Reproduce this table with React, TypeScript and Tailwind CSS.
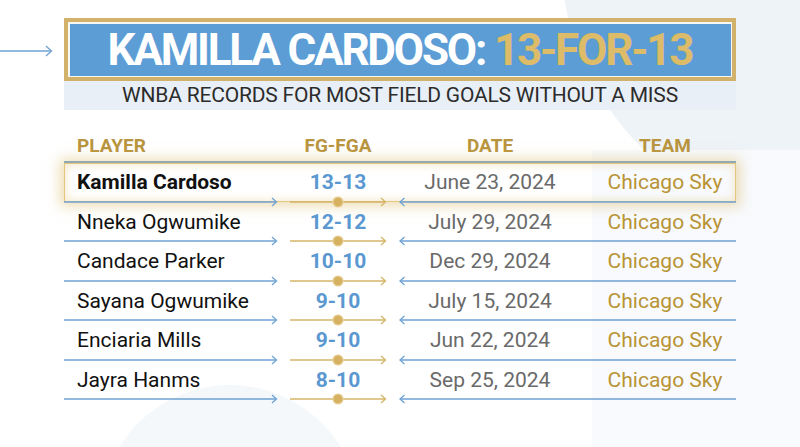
const rows = [
  { player: 'Kamilla Cardoso', fg: '13-13', date: 'June 23, 2024', team: 'Chicago Sky', top: true },
  { player: 'Nneka Ogwumike', fg: '12-12', date: 'July 29, 2024', team: 'Chicago Sky' },
  { player: 'Candace Parker', fg: '10-10', date: 'Dec 29, 2024', team: 'Chicago Sky' },
  { player: 'Sayana Ogwumike', fg: '9-10', date: 'July 15, 2024', team: 'Chicago Sky' },
  { player: 'Enciaria Mills', fg: '9-10', date: 'Jun 22, 2024', team: 'Chicago Sky' },
  { player: 'Jayra Hanms', fg: '8-10', date: 'Sep 25, 2024', team: 'Chicago Sky' },
]

const BLUE = '#6ea2d4'
const GOLD = '#d4b567'

// line under each row: blue arrow -> gold dot line -> blue arrow back
const Separator = ({ plain = false }: { plain?: boolean }) => (
  <svg width="672" height="12" viewBox="0 0 672 12" className="block relative">
    {plain ? (
      <line x1="0" y1="6" x2="672" y2="6" stroke={BLUE} strokeWidth="2" />
    ) : (
      <>
        <line x1="0" y1="6" x2="212" y2="6" stroke={BLUE} strokeWidth="1.6" />
        <path d="M208 2 L212.5 6 L208 10" fill="none" stroke={BLUE} strokeWidth="1.3" />
        <line x1="226" y1="6" x2="321" y2="6" stroke={GOLD} strokeWidth="1.6" />
        <path d="M317 2 L321.5 6 L317 10" fill="none" stroke={GOLD} strokeWidth="1.3" />
        <circle cx="274" cy="6" r="5" fill="#d6b15f" stroke="#e6cf98" strokeWidth="1.2" />
        <line x1="336" y1="6" x2="672" y2="6" stroke={BLUE} strokeWidth="1.6" />
        <path d="M340.5 2 L336 6 L340.5 10" fill="none" stroke={BLUE} strokeWidth="1.3" />
      </>
    )}
  </svg>
)

export default function App() {
  return (
    <div
      className="relative w-[800px] h-[447px] overflow-hidden bg-white"
      style={{ fontFamily: 'Roboto, "Liberation Sans", sans-serif' }}
    >
      {/* soft background shapes */}
      <div className="absolute left-[560px] top-[-330px] w-[640px] h-[560px] rounded-full bg-[#eef3f8]" />
      <div className="absolute left-[592px] top-[150px] w-[260px] h-[320px] bg-[#f8fafd]" />
      <div className="absolute left-[100px] top-[385px] w-[260px] h-[260px] rounded-full bg-[#f4f8fb]" />

      <div className="relative flex">
        {/* left arrow */}
        <div className="w-[64px] pt-[44px]">
          <svg width="56" height="14" viewBox="0 0 56 14" className="block">
            <line x1="0" y1="7" x2="51" y2="7" stroke={BLUE} strokeWidth="1.3" />
            <path d="M46 2 L51.5 7 L46 12" fill="none" stroke={BLUE} strokeWidth="1.3" />
          </svg>
        </div>

        <div className="w-[672px] flex flex-col pt-[18px]">
          {/* title */}
          <div className="h-[63px] border-4 border-[#d2b26a] bg-[#f7f7f4] p-[1.5px]">
            <div className="h-full bg-[#5c9dd5] flex items-center justify-center">
              <h1 className="text-[44px] font-bold leading-none tracking-[-2.2px] text-white">
                KAMILLA CARDOSO: <span className="text-[#dcbb69]">13-FOR-13</span>
              </h1>
            </div>
          </div>
          <div className="h-[29px] bg-[#e9eff6] flex items-center justify-center">
            <p className="text-[21px] leading-none text-[#2c2c2c] tracking-[-0.2px]">
              WNBA RECORDS FOR MOST FIELD GOALS WITHOUT A MISS
            </p>
          </div>

          {/* table header */}
          <div className="h-[46px] grid grid-cols-[226px_96px_208px_142px] items-end text-[19px] font-bold leading-[20px] text-[#b9953f]">
            <div className="pl-[13px]">PLAYER</div>
            <div className="text-center">FG-FGA</div>
            <div className="text-center">DATE</div>
            <div className="text-center">TEAM</div>
          </div>

          {/* rows */}
          <div className="flex flex-col">
            <Separator plain />
            {rows.map((r) => (
              <div key={r.player} className="relative">
                {r.top && (
                  <div className="absolute left-0 right-0 top-[-5px] bottom-[6px] border border-[#e3c67f] shadow-[0_0_12px_4px_rgba(222,188,104,0.5),inset_0_0_10px_rgba(228,196,112,0.45)]" />
                )}
                <div className="relative h-[27.5px] pt-[2px] grid grid-cols-[226px_96px_208px_142px] items-center text-[21px] leading-none">
                  <div className={`pl-[13px] text-[#111] ${r.top ? 'font-bold' : ''}`}>{r.player}</div>
                  <div className="text-center font-bold text-[#5b98d1]">{r.fg}</div>
                  <div className="text-center text-[#6a6a6a]">{r.date}</div>
                  <div className="text-center text-[#b89436]">{r.team}</div>
                </div>
                <Separator />
              </div>
            ))}
          </div>
        </div>
      </div>
    </div>
  )
}
